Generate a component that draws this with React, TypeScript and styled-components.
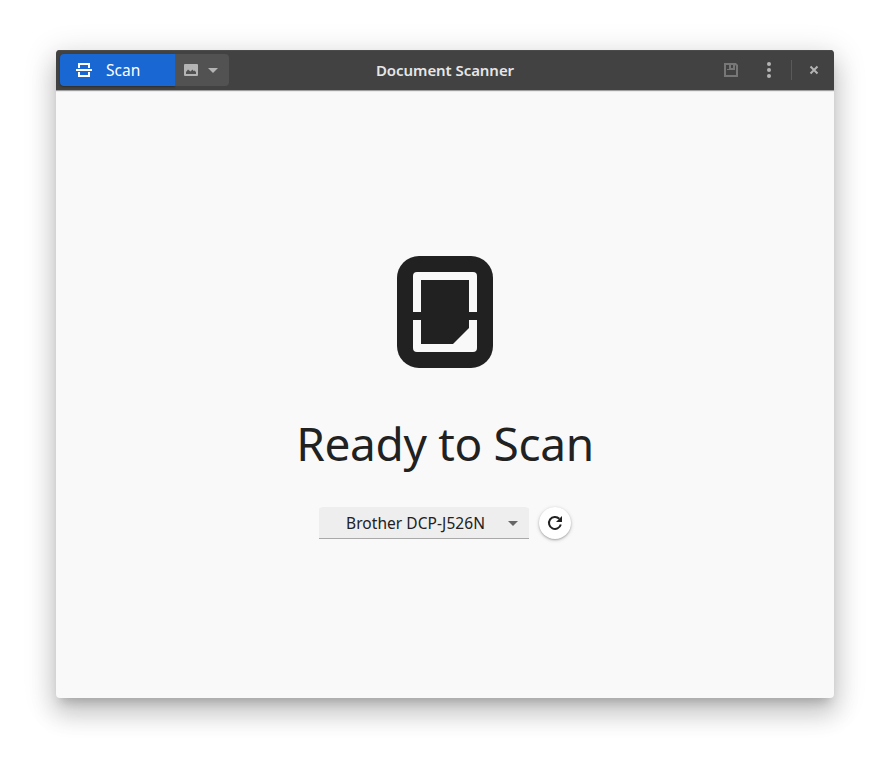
import React from "react";
import styled, { createGlobalStyle } from "styled-components";

const GlobalStyle = createGlobalStyle`
  *, *::before, *::after { box-sizing: border-box; }
  body { margin: 0; background: #fff; font-family: "Noto Sans", sans-serif; }
  button { font: inherit; border: 0; padding: 0; margin: 0; }
`;

const Desktop = styled.div`
  width: 890px;
  height: 760px;
  padding: 50px 56px 62px;
  overflow: hidden;
`;

const Window = styled.div`
  display: flex;
  flex-direction: column;
  height: 648px;
  border-radius: 4px;
  overflow: hidden;
  background: #f9f9f9;
  box-shadow: 0 8px 10px -5px rgba(0, 0, 0, 0.2), 0 16px 24px 2px rgba(0, 0, 0, 0.14),
    0 6px 30px 5px rgba(0, 0, 0, 0.12);
`;

const HeaderBar = styled.header`
  display: grid;
  grid-template-columns: 1fr auto 1fr;
  align-items: center;
  flex: none;
  height: 40px;
  padding: 0 4px;
  background: #424242;
  box-shadow: inset 0 1px #4b4b4b, 0 1px 1px rgba(0, 0, 0, 0.36);
`;

const LinkedButtons = styled.div`
  display: flex;
`;

const ScanButton = styled.button`
  display: flex;
  align-items: center;
  width: 115px;
  height: 32px;
  padding-left: 16px;
  gap: 14px;
  border-radius: 4px 0 0 4px;
  background: #1967d2;
  color: #fff;
  font-size: 15.5px;
  box-shadow: 0 1px 2px rgba(0, 0, 0, 0.35);
`;

const SourceButton = styled.button`
  display: flex;
  align-items: center;
  gap: 9px;
  width: 54px;
  height: 32px;
  padding-left: 8px;
  border-radius: 0 4px 4px 0;
  background: #525252;
`;

const Title = styled.h1`
  margin: 0;
  padding-bottom: 1px;
  font-size: 15px;
  line-height: 22px;
  font-weight: 600;
  letter-spacing: -0.06px;
  color: #e6e6e6;
  white-space: nowrap;
`;

const EndControls = styled.div`
  display: flex;
  align-items: center;
  justify-content: flex-end;
`;

const IconButton = styled.button<{ $width: number }>`
  display: grid;
  place-items: center;
  width: ${(p) => p.$width}px;
  height: 32px;
  background: transparent;
`;

const Separator = styled.div`
  width: 1px;
  height: 20px;
  margin: 0 6px 0 0;
  background: #5a5a5a;
`;

const Content = styled.main`
  display: flex;
  flex-direction: column;
  align-items: center;
  flex: 1;
  padding-top: 166px;
`;

const Heading = styled.h2`
  margin: 42px 0 0;
  height: 66px;
  font-size: 46px;
  line-height: 66px;
  font-weight: 400;
  letter-spacing: -0.35px;
  color: #212121;
  white-space: nowrap;
`;

const DeviceRow = styled.div`
  display: flex;
  gap: 10px;
  margin-top: 31px;
`;

const DeviceSelect = styled.button`
  display: flex;
  align-items: center;
  justify-content: space-between;
  width: 210px;
  height: 32px;
  padding: 0 11px 0 27px;
  border-radius: 4px 4px 0 0;
  background: #eeeeee;
  box-shadow: inset 0 -1px #a9a9a9;
  color: #212121;
  font-size: 15.5px;
  letter-spacing: 0.06px;
  white-space: nowrap;
`;

const RefreshButton = styled.button`
  display: grid;
  place-items: center;
  width: 32px;
  height: 32px;
  border-radius: 50%;
  background: #fff;
  box-shadow: 0 1px 2px rgba(0, 0, 0, 0.24), 0 1px 4px rgba(0, 0, 0, 0.16);
`;

const Svg = styled.svg`
  display: block;
  flex: none;
`;

const Arrow = ({ color }: { color: string }) => (
  <Svg width="10" height="5" viewBox="0 0 10 5">
    <path d="M0 0h10L5 5z" fill={color} />
  </Svg>
);

export default function App() {
  return (
    <>
      <GlobalStyle />
      <Desktop>
        <Window>
          <HeaderBar>
            <LinkedButtons>
              <ScanButton>
                <Svg width="16" height="16" viewBox="0 0 16 16" fill="none" stroke="#fff" strokeWidth="2">
                  <path d="M0 8h16M3 6V2h10v4M3 10v4h10v-4" />
                </Svg>
                <span>Scan</span>
              </ScanButton>
              <SourceButton aria-label="Source">
                <Svg width="16" height="16" viewBox="0 0 16 16">
                  <path
                    fillRule="evenodd"
                    d="M2 2h12a1 1 0 0 1 1 1v10a1 1 0 0 1-1 1H2a1 1 0 0 1-1-1V3a1 1 0 0 1 1-1zM3 12h10v-2l-1.500-1.500-1 .5L9.500 7.500 7.500 9.500 5 7.500 3 10z"
                    fill="#b4b4b4"
                  />
                </Svg>
                <Arrow color="#b4b4b4" />
              </SourceButton>
            </LinkedButtons>
            <Title>Document Scanner</Title>
            <EndControls>
              <IconButton $width={32} aria-label="Save">
                <Svg width="16" height="16" viewBox="0 0 16 16" fill="none">
                  <path d="M2 2h10.500L14 3.500V14H2z" stroke="#777" strokeWidth="2" />
                  <path d="M4 2h8v6H4z" fill="#777" />
                  <path d="M4 3h2v4H4zM8 3h2v3H8z" fill="#424242" />
                </Svg>
              </IconButton>
              <IconButton $width={44} aria-label="Menu">
                <Svg width="16" height="16" viewBox="0 0 16 16" fill="#b4b4b4">
                  <circle cx="8" cy="2" r="2" />
                  <circle cx="8" cy="8" r="2" />
                  <circle cx="8" cy="14" r="2" />
                </Svg>
              </IconButton>
              <Separator />
              <IconButton $width={32} aria-label="Close">
                <Svg width="16" height="16" viewBox="0 0 16 16">
                  <path d="m4.500 4.500 7 7m0-7-7 7" stroke="#b4b4b4" strokeWidth="2" />
                </Svg>
              </IconButton>
            </EndControls>
          </HeaderBar>
          <Content>
            <Svg width="96" height="112" viewBox="0 0 96 112">
              <rect width="96" height="112" rx="22" fill="#212121" />
              <path
                fill="#f9f9f9"
                d="M16 56V20q0-4 4-4h56q4 0 4 4v36h-8V24H24v32zM16 64h8v24h32l16-16v-8h8v28q0 4-4 4H20q-4 0-4-4z"
              />
            </Svg>
            <Heading>Ready to Scan</Heading>
            <DeviceRow>
              <DeviceSelect>
                <span>Brother DCP-J526N</span>
                <Arrow color="#666" />
              </DeviceSelect>
              <RefreshButton aria-label="Refresh">
                <Svg width="16" height="16" viewBox="0 0 16 16">
                  <path d="M12.300 3.700A6 6 0 1 0 13.800 9.500" fill="none" stroke="#212121" strokeWidth="2" />
                  <path d="M15 1v6H9z" fill="#212121" />
                </Svg>
              </RefreshButton>
            </DeviceRow>
          </Content>
        </Window>
      </Desktop>
    </>
  );
}
